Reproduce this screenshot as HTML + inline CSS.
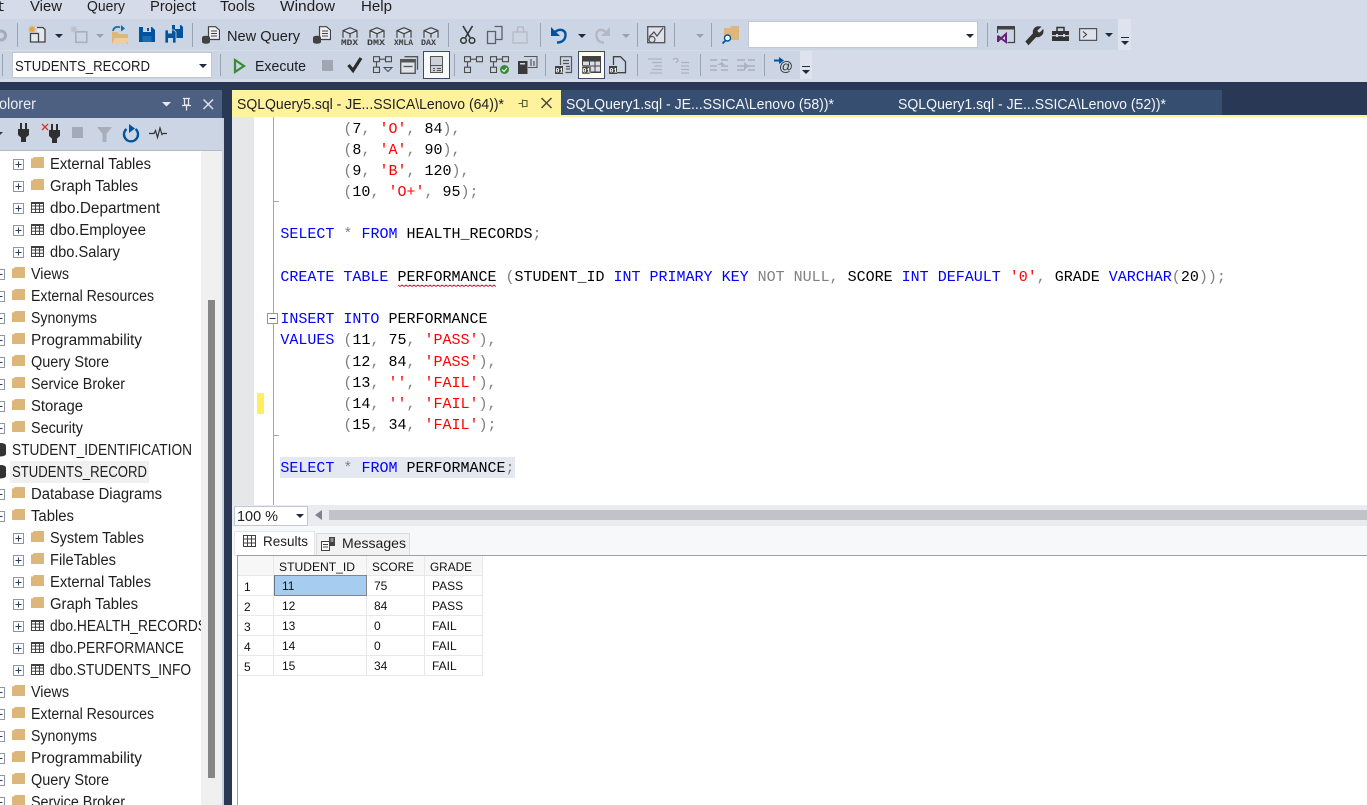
<!DOCTYPE html>
<html><head><meta charset="utf-8"><title>SSMS</title>
<style>
html,body{margin:0;padding:0;width:1367px;height:805px;overflow:hidden;background:#293955}
svg{display:block}
text{font-family:"Liberation Sans",sans-serif;font-size:15px;fill:#1e1e1e}
.c text{font-family:"Liberation Mono",monospace;font-size:15px;fill:#000;white-space:pre}
.k{fill:#0000ff}.s{fill:#ff0000}.g{fill:#808080}
.r text{font-size:12px;fill:#111}
.tr text{font-size:15.5px}
.sep{fill:#9aa3b3}
.lab{font-family:"Liberation Mono",monospace;font-size:8.500px;font-weight:bold;fill:#3a3a3a}
.o1{font-family:"Liberation Mono",monospace;font-size:6.500px;font-weight:bold;fill:#fff}
</style></head><body>
<svg xmlns="http://www.w3.org/2000/svg" width="1367" height="805" viewBox="0 0 1367 805">
<defs>
<symbol id="fold" width="13" height="11" viewBox="0 0 13 11"><path d="M0 1.500h1.500L3 0h10v11H0z" fill="#dcb67a"/></symbol>
<symbol id="tab" width="13" height="11" viewBox="0 0 13 11"><path d="M.5.5h12v10H.5zM.5 4h12M.5 7.200h12M4.500.5v10M8.500.5v10" fill="none" stroke="#404040" stroke-width="1"/><rect width="13" height="2" fill="#404040"/></symbol>
<symbol id="plus" width="11" height="11" viewBox="0 0 11 11"><rect x=".5" y=".5" width="10" height="10" fill="#fff" stroke="#8f95a3"/><path d="M2.500 5.500h6M5.500 2.500v6" stroke="#2d3f5f"/></symbol>
<symbol id="minus" width="11" height="11" viewBox="0 0 11 11"><rect x=".5" y=".5" width="10" height="10" fill="#fff" stroke="#8f95a3"/><path d="M2.500 5.500h6" stroke="#2d3f5f"/></symbol>
<symbol id="dd" width="8" height="4" viewBox="0 0 8 4"><path d="M0 0h8l-4 4z" fill="#1e2a3e"/></symbol>
<symbol id="ddg" width="8" height="4" viewBox="0 0 8 4"><path d="M0 0h8l-4 4z" fill="#9aa1ad"/></symbol>
<symbol id="qdoc" width="18" height="18" viewBox="0 0 18 18"><path d="M6.500.7h7l4 3.500v9.300h-11z" fill="#eef1f6" stroke="#424242" stroke-width="1.200"/><path d="M9 5h6M9 7.500h6M9 10h6" stroke="#424242"/><path d="M0 11.500a4 1.700 0 0 1 8 0v4.500a4 1.700 0 0 1-8 0z" fill="#424242"/></symbol>
<symbol id="cube" width="16" height="12" viewBox="0 0 16 12"><path d="M8 .7l7 3v7M8 .7l-7 3v7M1 3.700l7 3 7-3M8 6.700v4" fill="#dfe4ee" stroke="#424242" stroke-width="1.200"/></symbol>
<symbol id="plan" width="19" height="17" viewBox="0 0 19 17"><path d="M.5.700h6v5h-6zM12.500.700h6v5h-6zM6.500 3.200h6M3.500 5.700v5.500M.5 11.200h6v5.300h-6z" fill="none" stroke="#4a4a4a" stroke-width="1.100"/></symbol>
<symbol id="plug" width="11" height="19" viewBox="0 0 11 19"><path d="M2 0h2v6h3V0h2v6h2v6l-3 2.500V19H3v-4.500L0 12V6h2z" fill="#2f2f2f"/></symbol>
<clipPath id="tree"><rect x="0" y="150" width="201" height="655"/></clipPath>
<clipPath id="sq"><rect x="398" y="283" width="98" height="6"/></clipPath>
</defs>

<!-- chrome -->
<rect width="1367" height="82" fill="#d6dbe9"/>
<rect y="19" width="1118" height="31" fill="#ccd5e4"/>
<rect x="1118" y="19" width="13" height="31" fill="#dfe3ee"/>
<rect y="51" width="800" height="28" fill="#ccd5e4"/>
<rect x="800" y="51" width="12" height="28" fill="#dfe3ee"/>
<rect y="82" width="1367" height="723" fill="#293955"/>

<!-- menu -->
<text x="-4" y="11" textLength="8" lengthAdjust="spacingAndGlyphs">t</text>
<text x="30" y="11" textLength="32" lengthAdjust="spacingAndGlyphs">View</text>
<text x="87" y="11" textLength="38" lengthAdjust="spacingAndGlyphs">Query</text>
<text x="150" y="11" textLength="46" lengthAdjust="spacingAndGlyphs">Project</text>
<text x="220" y="11" textLength="35" lengthAdjust="spacingAndGlyphs">Tools</text>
<text x="280" y="11" textLength="55" lengthAdjust="spacingAndGlyphs">Window</text>
<text x="361" y="11" textLength="31" lengthAdjust="spacingAndGlyphs">Help</text>

<!-- toolbar row 1 -->
<circle cx="1" cy="35.500" r="4.500" fill="none" stroke="#a6acb7" stroke-width="3"/>
<rect x="17" y="23" width="1" height="24" class="sep"/>
<path d="M37 27.500h6l2 2v12.500h-7" fill="#e4e8f0" stroke="#424242" stroke-width="1.300"/><path d="M30.500 33.500h8v8.500h-8z" fill="#e4e8f0" stroke="#424242" stroke-width="1.300"/>
<path d="M32 25l.8 2.200 2.200-.9-.9 2.200 2.200.8-2.200.8.900 2.200-2.200-.9-.8 2.200-.8-2.200-2.200.9.900-2.200-2.200-.8 2.200-.8-.9-2.200 2.200.9z" fill="#e8a33b"/>
<use href="#dd" x="55" y="34"/>
<path d="M75.800 31.800h11v10.500h-11z" fill="none" stroke="#aab0bb" stroke-width="1.600"/>
<path d="M74 25l.8 2.200 2.200-.9-.9 2.200 2.200.8-2.200.8.900 2.200-2.200-.9-.8 2.200-.8-2.200-2.200.9.900-2.200-2.200-.8 2.200-.8-.9-2.200 2.200.9z" fill="#bcc1ca"/>
<use href="#ddg" x="96" y="34"/>
<path d="M112 32h5l2 2h9v10h-16z" fill="#dcb67a"/><path d="M112 44l3-6h14l-2 6z" fill="#ecd09c"/><path d="M113 31c.5-3.500 4-5 7-3.500" fill="none" stroke="#1b6aa5" stroke-width="1.800"/><path d="M120 24.500v6.500l-4-3.500z" fill="#1b6aa5" transform="rotate(180 120 28) translate(-1 0)"/>
<path d="M139 27h13l3 3v12h-16z" fill="#00539c"/><rect x="143" y="27" width="8" height="5" fill="#ccd5e4"/><rect x="147" y="28" width="2" height="3" fill="#00539c"/><rect x="142.500" y="36" width="9" height="6" fill="#1a6cb0"/>
<path d="M172 25h9l2 2v11h-11z" fill="#00539c"/><rect x="175" y="25" width="5" height="4" fill="#ccd5e4"/><path d="M165 30h9l2 2v11h-11z" fill="#00539c" stroke="#ccd5e4" stroke-width=".8"/><rect x="168" y="30" width="4" height="3.500" fill="#ccd5e4"/><rect x="168" y="38" width="5" height="5" fill="#ccd5e4"/>
<rect x="192" y="23" width="1" height="24" class="sep"/>
<use href="#qdoc" x="202" y="26"/>
<text x="227" y="41" textLength="73" lengthAdjust="spacingAndGlyphs">New Query</text>
<use href="#qdoc" x="313" y="26"/>
<use href="#cube" x="342" y="27"/><text x="341" y="45" textLength="17" lengthAdjust="spacingAndGlyphs" class="lab">MDX</text>
<use href="#cube" x="369" y="27"/><text x="367" y="45" textLength="18" lengthAdjust="spacingAndGlyphs" class="lab">DMX</text>
<use href="#cube" x="396" y="27"/><text x="394" y="45" textLength="19" lengthAdjust="spacingAndGlyphs" class="lab">XMLA</text>
<use href="#cube" x="423" y="27"/><text x="421" y="45" textLength="15" lengthAdjust="spacingAndGlyphs" class="lab">DAX</text>
<rect x="448" y="23" width="1" height="24" class="sep"/>
<path d="M463 26l7 11.500M472.500 26l-7 11.500" stroke="#333" stroke-width="1.600" fill="none"/><circle cx="463.500" cy="40.500" r="2.800" fill="none" stroke="#333" stroke-width="1.500"/><circle cx="472" cy="40.500" r="2.800" fill="none" stroke="#333" stroke-width="1.500"/>
<path d="M494.500 26.500h7.500v13h-6" fill="none" stroke="#5a5f68" stroke-width="1.300"/><path d="M487.500 31.500h8v12h-8z" fill="#ccd5e4" stroke="#5a5f68" stroke-width="1.300"/>
<path d="M516 32h11v11h-14V32z" fill="none" stroke="#b3b8c2" stroke-width="1.300"/><path d="M517 32l1-5h5l1 5" fill="none" stroke="#b3b8c2" stroke-width="1.300"/>
<rect x="540" y="23" width="1" height="24" class="sep"/>
<path d="M551 27v9h9z" fill="#00539c"/><path d="M555 32c5-4 11-2 10.500 3.500s-5 7-8.500 7" fill="none" stroke="#00539c" stroke-width="2.400"/>
<use href="#dd" x="578" y="34"/>
<path d="M610 27v9h-9z" fill="#b3b8c2"/><path d="M606 32c-5-4-10-2-9.500 3.500s4 7 7.500 7" fill="none" stroke="#b3b8c2" stroke-width="2.400"/>
<use href="#ddg" x="622" y="34"/>
<rect x="637" y="23" width="1" height="24" class="sep"/>
<path d="M647.700 26.700h17v16h-17z" fill="#dde2ec" stroke="#555" stroke-width="1.300"/><path d="M649 37l5-5 3 4 6-8" fill="none" stroke="#555" stroke-width="1.300"/><circle cx="652" cy="39.500" r="3" fill="#dde2ec" stroke="#555" stroke-width="1.200"/>
<rect x="674" y="23" width="1" height="24" class="sep"/>
<use href="#ddg" x="696" y="34"/>
<rect x="711" y="23" width="1" height="24" class="sep"/>
<path d="M724 28h6l1.500-2h7.500v14h-15z" fill="#dcb67a"/><circle cx="727.500" cy="38" r="3" fill="#fff" stroke="#00539c" stroke-width="1.400"/><path d="M725.500 40.500l-3 3" stroke="#00539c" stroke-width="1.800"/>
<rect x="748.500" y="21.500" width="229" height="26" fill="#fff" stroke="#c0c7d6"/>
<use href="#dd" x="966" y="34"/>
<rect x="987" y="23" width="1" height="24" class="sep"/>
<path d="M1014.500 29v13.500h-7" fill="none" stroke="#424242" stroke-width="1.200"/><rect x="997" y="26" width="18" height="3.500" fill="#424242"/><path d="M997.500 29v4" stroke="#424242"/><path d="M998 35.500v6.500M998 36l8 6v-8l-8 7" fill="none" stroke="#68217a" stroke-width="2"/>
<path d="M1026 41.500l7.500-8c-1-4 2-7.500 7-6.500l-3.500 3 .5 2.500 2.500.5 3-3c.5 4.500-3 7.500-7 6.500l-7.500 8z" fill="#333" stroke="#333"/>
<path d="M1052 31h17v10h-17z" fill="#333"/><path d="M1057 31v-3.500h7v3.500" fill="none" stroke="#333" stroke-width="1.500"/><rect x="1052" y="35" width="17" height="1.200" fill="#ccd5e4"/><rect x="1056" y="34" width="2" height="3" fill="#ccd5e4"/><rect x="1063" y="34" width="2" height="3" fill="#ccd5e4"/>
<path d="M1079.600 28.600h17v11.800h-17z" fill="#dde2ec" stroke="#555" stroke-width="1.200"/><path d="M1083 31.500l3.500 3-3.500 3" fill="none" stroke="#333"/>
<use href="#dd" x="1105" y="33"/>
<rect x="1121" y="37" width="8" height="1" fill="#1e2a3e"/><use href="#dd" x="1121" y="41"/>

<!-- toolbar row 2 -->
<rect x="2" y="54" width="1" height="22" class="sep"/>
<rect x="12.500" y="52.500" width="199" height="25" fill="#fff" stroke="#c0c7d6"/>
<text x="15" y="71" textLength="135" lengthAdjust="spacingAndGlyphs">STUDENTS_RECORD</text>
<use href="#dd" x="199" y="64"/>
<rect x="220" y="54" width="1" height="22" class="sep"/>
<path d="M235 60v12l9-6z" fill="none" stroke="#388a34" stroke-width="2.200"/>
<text x="255" y="71" textLength="51" lengthAdjust="spacingAndGlyphs">Execute</text>
<rect x="322" y="60" width="11" height="11" fill="#a0a6b2"/>
<path d="M348.500 65l4.500 5.500 8-12.500" fill="none" stroke="#2b2b2b" stroke-width="3.200"/>
<use href="#plan" x="373" y="56"/><path d="M384 67.500h8l-4 4z" fill="none" stroke="#4a4a4a"/>
<path d="M404.500 56.700h13v13" fill="none" stroke="#555" stroke-width="1.300"/><path d="M400.700 59.700h14.500v13.600h-14.500z" fill="#dde2ec" stroke="#555" stroke-width="1.400"/><rect x="401" y="60" width="14" height="2.500" fill="#555"/><path d="M403.500 66.500h9" stroke="#555" stroke-width="1.300"/>
<rect x="423.500" y="51.500" width="26" height="27" fill="#f8f9fb" stroke="#3a4a68"/>
<path d="M430.500 56.500h12v16h-12z" fill="#ccd0d8" stroke="#555"/><path d="M430.500 65.500h12M437 68.500h4M437 70.500h4M433 68.500h2M433 70.500h2" stroke="#555" fill="none"/>
<rect x="454" y="54" width="1" height="22" class="sep"/>
<use href="#plan" x="464" y="56"/>
<use href="#plan" x="490" y="56"/><circle cx="504.500" cy="69.500" r="4.500" fill="#388a34"/><path d="M502 69.500l2 2 3-3.500" stroke="#fff" fill="none"/>
<path d="M524 56.500h13v11h-9" fill="#ccd5e4" stroke="#555" stroke-width="1.100"/><path d="M531 59v7M534 61v5" stroke="#555" stroke-width="1.200"/><rect x="518" y="61" width="9.500" height="13" fill="#3a3a3a"/><rect x="520" y="63" width="5" height="1.500" fill="#ccd5e4"/>
<rect x="545" y="54" width="1" height="22" class="sep"/>
<path d="M560.500 65V56.700h11v15.800h-6M563 60.500h6M563 63.500h6M566 66.500h4M566 69h4" fill="none" stroke="#555" stroke-width="1.200"/><rect x="555" y="66" width="8" height="8" fill="#424242"/><text x="555.500" y="72.500" class="o1">01</text>
<rect x="578.500" y="51.500" width="26" height="27" fill="#fffdf3" stroke="#3a4a68"/>
<path d="M582 56h19v17h-19z" fill="#424242"/><path d="M590 61.500h4.500v4h-4.500zM595.500 61.500h4.500v4h-4.500zM591 66.500h3.500v5h-3.500zM595.500 66.500h4.500v5h-4.500zM583 61.500h6v3.500h-6z" fill="#d7dce6"/><rect x="582" y="66" width="8" height="8" fill="#424242" stroke="#fffdf3" stroke-width=".5"/><text x="582.500" y="72.500" class="o1">01</text>
<path d="M613.500 65V56.700h7l5 5v11h-9" fill="none" stroke="#424242" stroke-width="1.300"/><rect x="609" y="66" width="8" height="8" fill="#424242"/><text x="609.500" y="72.500" class="o1">01</text>
<rect x="637" y="54" width="1" height="22" class="sep"/>
<path d="M648 59h14M652 62.500h10M654 66h8M652 69.500h10M650 73h12" stroke="#aeb4bf" stroke-width="1.300"/>
<path d="M673 60c1-2 5-2 5 0s-2 2-2 3M681 62.500h8M681 66h8M681 69.500h8M681 73h8" stroke="#aeb4bf" stroke-width="1.300" fill="none"/>
<rect x="700" y="54" width="1" height="22" class="sep"/>
<path d="M710 60h7M710 66h7M710 70h7M721 60h7M721 66h7M721 70h7" stroke="#aeb4bf" stroke-width="1.700" fill="none"/><path d="M717 65h8l-3-3zM717 65l4 3.500" fill="#aeb4bf"/>
<path d="M737 60h8M737 66h7M737 70h8M748 60h7M748 66h7M748 70h7" stroke="#aeb4bf" stroke-width="1.700" fill="none"/><path d="M744 62l5 4-5 4z" fill="#aeb4bf"/>
<rect x="764" y="54" width="1" height="22" class="sep"/>
<path d="M774 60.500h6" stroke="#00539c" stroke-width="2"/><path d="M779 57l5 3.500-5 3.500z" fill="#00539c"/>
<text x="779" y="71" textLength="14" lengthAdjust="spacingAndGlyphs" style="font-size:14px;fill:#333">@</text>
<rect x="802" y="66" width="8" height="1" fill="#1e2a3e"/><use href="#dd" x="802" y="70"/>

<!-- explorer panel -->
<rect y="90" width="222" height="28" fill="#4d6082"/>
<text x="-1" y="109" textLength="37" lengthAdjust="spacingAndGlyphs" style="fill:#e8ebf2;font-size:15.5px">olorer</text>
<path d="M162 102h9l-4.500 4.500z" fill="#e6e9f0"/>
<path d="M183 98.500h7M184.500 98.500v6.500h4v-6.500M182 105.500h9M186.500 105.500v5" fill="none" stroke="#e6e9f0" stroke-width="1.200"/>
<path d="M203.500 99.500l9.500 9.500M213 99.500l-9.500 9.500" stroke="#dde1ea" stroke-width="1.500"/>
<rect y="118" width="222" height="32" fill="#ccd5e4"/>
<path d="M-3 132h6l-3 3z" fill="#333"/>
<use href="#plug" x="18" y="123"/>
<use href="#plug" x="49" y="124"/><path d="M42 124l6 6M48 124l-6 6" stroke="#c43c2c" stroke-width="1.300"/>
<rect x="72" y="127" width="11" height="11" fill="#a5abb6"/>
<path d="M97 127h15l-5.500 7v8h-4v-8z" fill="#a9afba"/>
<path d="M126.500 129a7 7 0 1 0 9 0" fill="none" stroke="#00539c" stroke-width="2.400"/><path d="M129 124v9l6-4.500z" fill="#00539c"/>
<path d="M149 133.500h5l1.500-3 2 7 2.500-9.500 2 6.500 1-1h4" fill="none" stroke="#333" stroke-width="1.200"/>

<!-- tree -->
<rect y="150" width="222" height="655" fill="#fff"/>
<rect y="150" width="222" height="1" fill="#b4b9c4"/>
<rect x="222" y="118" width="2" height="687" fill="#c9cfdb"/>
<rect x="201" y="151" width="21" height="654" fill="#f0f0f0"/>
<rect x="208" y="300" width="7" height="478" fill="#868686"/>
<rect x="10" y="461" width="139" height="22" fill="#f0f0f0"/>
<g class="tr" clip-path="url(#tree)">
<use href="#plus" x="13" y="159"/><use href="#fold" x="31" y="157"/><text x="50" y="169" textLength="101" lengthAdjust="spacingAndGlyphs">External Tables</text>
<use href="#plus" x="13" y="181"/><use href="#fold" x="31" y="179"/><text x="50" y="191" textLength="88" lengthAdjust="spacingAndGlyphs">Graph Tables</text>
<use href="#plus" x="13" y="203"/><use href="#tab" x="31" y="202"/><text x="50" y="213" textLength="110" lengthAdjust="spacingAndGlyphs">dbo.Department</text>
<use href="#plus" x="13" y="225"/><use href="#tab" x="31" y="224"/><text x="50" y="235" textLength="96" lengthAdjust="spacingAndGlyphs">dbo.Employee</text>
<use href="#plus" x="13" y="247"/><use href="#tab" x="31" y="246"/><text x="50" y="257" textLength="70" lengthAdjust="spacingAndGlyphs">dbo.Salary</text>
<use href="#minus" x="-6" y="269"/><use href="#fold" x="12" y="267"/><text x="31" y="279" textLength="38" lengthAdjust="spacingAndGlyphs">Views</text>
<use href="#minus" x="-6" y="291"/><use href="#fold" x="12" y="289"/><text x="31" y="301" textLength="123" lengthAdjust="spacingAndGlyphs">External Resources</text>
<use href="#minus" x="-6" y="313"/><use href="#fold" x="12" y="311"/><text x="31" y="323" textLength="66" lengthAdjust="spacingAndGlyphs">Synonyms</text>
<use href="#minus" x="-6" y="335"/><use href="#fold" x="12" y="333"/><text x="31" y="345" textLength="111" lengthAdjust="spacingAndGlyphs">Programmability</text>
<use href="#minus" x="-6" y="357"/><use href="#fold" x="12" y="355"/><text x="31" y="367" textLength="78" lengthAdjust="spacingAndGlyphs">Query Store</text>
<use href="#minus" x="-6" y="379"/><use href="#fold" x="12" y="377"/><text x="31" y="389" textLength="94" lengthAdjust="spacingAndGlyphs">Service Broker</text>
<use href="#minus" x="-6" y="401"/><use href="#fold" x="12" y="399"/><text x="31" y="411" textLength="52" lengthAdjust="spacingAndGlyphs">Storage</text>
<use href="#minus" x="-6" y="423"/><use href="#fold" x="12" y="421"/><text x="31" y="433" textLength="52" lengthAdjust="spacingAndGlyphs">Security</text>
<path d="M-5 445.500a5.500 2.500 0 0 1 11 0v8.500a5.500 2.500 0 0 1-11 0z" fill="#333"/><text x="12" y="455" textLength="180" lengthAdjust="spacingAndGlyphs">STUDENT_IDENTIFICATION</text>
<path d="M-5 467.500a5.500 2.500 0 0 1 11 0v8.500a5.500 2.500 0 0 1-11 0z" fill="#333"/><text x="12" y="477" textLength="135" lengthAdjust="spacingAndGlyphs">STUDENTS_RECORD</text>
<use href="#minus" x="-6" y="489"/><use href="#fold" x="12" y="487"/><text x="31" y="499" textLength="131" lengthAdjust="spacingAndGlyphs">Database Diagrams</text>
<use href="#minus" x="-6" y="511"/><use href="#fold" x="12" y="509"/><text x="31" y="521" textLength="43" lengthAdjust="spacingAndGlyphs">Tables</text>
<use href="#plus" x="13" y="533"/><use href="#fold" x="31" y="531"/><text x="50" y="543" textLength="94" lengthAdjust="spacingAndGlyphs">System Tables</text>
<use href="#plus" x="13" y="555"/><use href="#fold" x="31" y="553"/><text x="50" y="565" textLength="66" lengthAdjust="spacingAndGlyphs">FileTables</text>
<use href="#plus" x="13" y="577"/><use href="#fold" x="31" y="575"/><text x="50" y="587" textLength="101" lengthAdjust="spacingAndGlyphs">External Tables</text>
<use href="#plus" x="13" y="599"/><use href="#fold" x="31" y="597"/><text x="50" y="609" textLength="88" lengthAdjust="spacingAndGlyphs">Graph Tables</text>
<use href="#plus" x="13" y="621"/><use href="#tab" x="31" y="620"/><text x="50" y="631" textLength="157" lengthAdjust="spacingAndGlyphs">dbo.HEALTH_RECORDS</text>
<use href="#plus" x="13" y="643"/><use href="#tab" x="31" y="642"/><text x="50" y="653" textLength="134" lengthAdjust="spacingAndGlyphs">dbo.PERFORMANCE</text>
<use href="#plus" x="13" y="665"/><use href="#tab" x="31" y="664"/><text x="50" y="675" textLength="141" lengthAdjust="spacingAndGlyphs">dbo.STUDENTS_INFO</text>
<use href="#minus" x="-6" y="687"/><use href="#fold" x="12" y="685"/><text x="31" y="697" textLength="38" lengthAdjust="spacingAndGlyphs">Views</text>
<use href="#minus" x="-6" y="709"/><use href="#fold" x="12" y="707"/><text x="31" y="719" textLength="123" lengthAdjust="spacingAndGlyphs">External Resources</text>
<use href="#minus" x="-6" y="731"/><use href="#fold" x="12" y="729"/><text x="31" y="741" textLength="66" lengthAdjust="spacingAndGlyphs">Synonyms</text>
<use href="#minus" x="-6" y="753"/><use href="#fold" x="12" y="751"/><text x="31" y="763" textLength="111" lengthAdjust="spacingAndGlyphs">Programmability</text>
<use href="#minus" x="-6" y="775"/><use href="#fold" x="12" y="773"/><text x="31" y="785" textLength="78" lengthAdjust="spacingAndGlyphs">Query Store</text>
<use href="#minus" x="-6" y="797"/><use href="#fold" x="12" y="795"/><text x="31" y="807" textLength="94" lengthAdjust="spacingAndGlyphs">Service Broker</text>
</g>

<!-- tabs -->
<rect x="561" y="90" width="661" height="25" fill="#364e6f"/>
<rect x="232" y="90" width="329" height="27" fill="#fff29d"/>
<rect x="232" y="115" width="1135" height="2" fill="#fff29d"/>
<text x="237" y="109" textLength="267" lengthAdjust="spacingAndGlyphs">SQLQuery5.sql - JE...SSICA\Lenovo (64))*</text>
<path d="M518.500 103.500h3.500M522.500 99.500v8M522.500 100.500h4.500v6h-4.500" fill="none" stroke="#5a5a3c" stroke-width="1.100"/>
<path d="M541.500 98l10 10M551.500 98l-10 10" stroke="#4a4a38" stroke-width="1.500"/>
<text x="566" y="109" textLength="268" lengthAdjust="spacingAndGlyphs" style="fill:#f2f4f8">SQLQuery1.sql - JE...SSICA\Lenovo (58))*</text>
<text x="898" y="109" textLength="268" lengthAdjust="spacingAndGlyphs" style="fill:#f2f4f8">SQLQuery1.sql - JE...SSICA\Lenovo (52))*</text>

<!-- editor -->
<rect x="232" y="117" width="1135" height="388" fill="#fff"/>
<rect x="232" y="117" width="22" height="388" fill="#e6e7e8"/>
<rect x="257" y="393" width="7" height="21" fill="#ffee62"/>
<rect x="273" y="117" width="1" height="388" fill="#a5a5a5"/>
<rect x="273" y="201" width="6" height="1" fill="#a5a5a5"/>
<rect x="273" y="435" width="6" height="1" fill="#a5a5a5"/>
<use href="#minus" x="267" y="313"/>
<rect x="280" y="457" width="235" height="21" fill="#e4e9f1"/>
<g class="c">
<text x="280.400" y="133" xml:space="preserve">       <tspan class="g">(</tspan>7<tspan class="g">,</tspan> <tspan class="s">'O'</tspan><tspan class="g">,</tspan> 84<tspan class="g">),</tspan></text>
<text x="280.400" y="154" xml:space="preserve">       <tspan class="g">(</tspan>8<tspan class="g">,</tspan> <tspan class="s">'A'</tspan><tspan class="g">,</tspan> 90<tspan class="g">),</tspan></text>
<text x="280.400" y="175" xml:space="preserve">       <tspan class="g">(</tspan>9<tspan class="g">,</tspan> <tspan class="s">'B'</tspan><tspan class="g">,</tspan> 120<tspan class="g">),</tspan></text>
<text x="280.400" y="196" xml:space="preserve">       <tspan class="g">(</tspan>10<tspan class="g">,</tspan> <tspan class="s">'O+'</tspan><tspan class="g">,</tspan> 95<tspan class="g">);</tspan></text>
<text x="280.400" y="238" xml:space="preserve"><tspan class="k">SELECT</tspan> <tspan class="g">*</tspan> <tspan class="k">FROM</tspan> HEALTH_RECORDS<tspan class="g">;</tspan></text>
<text x="280.400" y="281" xml:space="preserve"><tspan class="k">CREATE</tspan> <tspan class="k">TABLE</tspan> PERFORMANCE <tspan class="g">(</tspan>STUDENT_ID <tspan class="k">INT</tspan> <tspan class="k">PRIMARY</tspan> <tspan class="k">KEY</tspan> <tspan class="g">NOT</tspan> <tspan class="g">NULL,</tspan> SCORE <tspan class="k">INT</tspan> <tspan class="k">DEFAULT</tspan> <tspan class="s">'0'</tspan><tspan class="g">,</tspan> GRADE <tspan class="k">VARCHAR</tspan><tspan class="g">(</tspan>20<tspan class="g">));</tspan></text>
<text x="280.400" y="323" xml:space="preserve"><tspan class="k">INSERT</tspan> <tspan class="k">INTO</tspan> PERFORMANCE</text>
<text x="280.400" y="344" xml:space="preserve"><tspan class="k">VALUES</tspan> <tspan class="g">(</tspan>11<tspan class="g">,</tspan> 75<tspan class="g">,</tspan> <tspan class="s">'PASS'</tspan><tspan class="g">),</tspan></text>
<text x="280.400" y="366" xml:space="preserve">       <tspan class="g">(</tspan>12<tspan class="g">,</tspan> 84<tspan class="g">,</tspan> <tspan class="s">'PASS'</tspan><tspan class="g">),</tspan></text>
<text x="280.400" y="387" xml:space="preserve">       <tspan class="g">(</tspan>13<tspan class="g">,</tspan> <tspan class="s">''</tspan><tspan class="g">,</tspan> <tspan class="s">'FAIL'</tspan><tspan class="g">),</tspan></text>
<text x="280.400" y="408" xml:space="preserve">       <tspan class="g">(</tspan>14<tspan class="g">,</tspan> <tspan class="s">''</tspan><tspan class="g">,</tspan> <tspan class="s">'FAIL'</tspan><tspan class="g">),</tspan></text>
<text x="280.400" y="429" xml:space="preserve">       <tspan class="g">(</tspan>15<tspan class="g">,</tspan> 34<tspan class="g">,</tspan> <tspan class="s">'FAIL'</tspan><tspan class="g">);</tspan></text>
<text x="280.400" y="472" xml:space="preserve"><tspan class="k">SELECT</tspan> <tspan class="g">*</tspan> <tspan class="k">FROM</tspan> PERFORMANCE<tspan class="g">;</tspan></text>
</g>
<path clip-path="url(#sq)" d="M398 285l2 1.500 2-1.500 2 1.500 2-1.500 2 1.500 2-1.500 2 1.500 2-1.500 2 1.500 2-1.500 2 1.500 2-1.500 2 1.500 2-1.500 2 1.500 2-1.500 2 1.500 2-1.500 2 1.500 2-1.500 2 1.500 2-1.500 2 1.500 2-1.500 2 1.500 2-1.500 2 1.500 2-1.500 2 1.500 2-1.500 2 1.500 2-1.500 2 1.500 2-1.500 2 1.500 2-1.500 2 1.500 2-1.500 2 1.500 2-1.500 2 1.500 2-1.500 2 1.500 2-1.500 2 1.500 2-1.500 2 1.500 2-1.500 2 1.500 2-1.500 2 1.500 2-1.500" fill="none" stroke="#ff0000" stroke-width=".8"/>

<!-- zoom bar + results -->
<rect x="232" y="505" width="1135" height="300" fill="#fff"/>
<rect x="232" y="505" width="1135" height="21" fill="#e9ebf0"/>
<rect x="234.500" y="506.500" width="73" height="19" fill="#fff" stroke="#c0c7d6"/>
<text x="237" y="521" textLength="41" lengthAdjust="spacingAndGlyphs">100 %</text>
<use href="#dd" x="296" y="514"/>
<path d="M322 510v10l-7-5z" fill="#7b8494"/>
<rect x="329" y="510" width="1038" height="10" fill="#c2c3c9"/>
<rect x="232" y="526" width="1135" height="29" fill="#f7f8fa"/>
<rect x="234.500" y="531.500" width="80" height="24" fill="#fff" stroke="#e2e4e8"/>
<rect x="316.500" y="533.500" width="93" height="22" fill="#f2f2f2" stroke="#dcdcdc"/>
<path d="M243.500 535.500h12v11h-12zM243.500 539h12M243.500 543h12M247.500 535.500v11M251.500 535.500v11" fill="none" stroke="#404040"/>
<text x="263" y="546" textLength="45" lengthAdjust="spacingAndGlyphs" style="font-size:14px">Results</text>
<path d="M321.500 541.500h8v9h-8zM323 544.500h5M323 547h5" fill="#fff" stroke="#424242"/><path d="M329 537h6v9h-6z" fill="#424242"/><path d="M330.500 539h3M330.500 541h3" stroke="#ddd"/>
<text x="342" y="548" textLength="64" lengthAdjust="spacingAndGlyphs" style="font-size:14px">Messages</text>
<rect x="237" y="555" width="1130" height="1" fill="#a0a0a0"/>
<rect x="237" y="555" width="1" height="250" fill="#a0a0a0"/>
<rect x="238" y="556" width="245" height="19" fill="#f7f7f7"/>
<rect x="274" y="576" width="92" height="19" fill="#a6cdf0"/>
<path d="M273.500 556v119.500M366.500 556v119.500M424.500 556v119.500M482.500 556v119.500M238 575.500h245M238 595.500h245M238 615.500h245M238 635.500h245M238 655.500h245M238 675.500h245" stroke="#e8e8e8" fill="none"/>
<rect x="274.500" y="575.500" width="92" height="20" fill="none" stroke="#222" stroke-dasharray="1 1"/>
<g class="r">
<text x="279" y="571" textLength="76" lengthAdjust="spacingAndGlyphs">STUDENT_ID</text>
<text x="372" y="571" textLength="42" lengthAdjust="spacingAndGlyphs">SCORE</text>
<text x="430" y="571" textLength="42" lengthAdjust="spacingAndGlyphs">GRADE</text>
<text x="244" y="591">1</text><text x="282" y="590">11</text><text x="374" y="590">75</text><text x="432" y="590">PASS</text>
<text x="244" y="611">2</text><text x="282" y="610">12</text><text x="374" y="610">84</text><text x="432" y="610">PASS</text>
<text x="244" y="631">3</text><text x="282" y="630">13</text><text x="374" y="630">0</text><text x="432" y="630">FAIL</text>
<text x="244" y="651">4</text><text x="282" y="650">14</text><text x="374" y="650">0</text><text x="432" y="650">FAIL</text>
<text x="244" y="671">5</text><text x="282" y="670">15</text><text x="374" y="670">34</text><text x="432" y="670">FAIL</text>
</g>
</svg>
</body></html>
